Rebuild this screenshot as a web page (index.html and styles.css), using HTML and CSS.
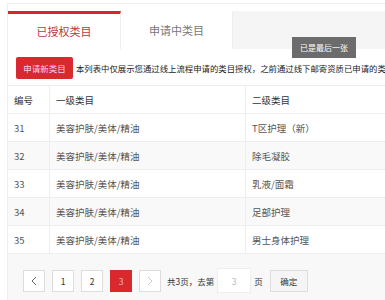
FILE: index.html
```html
<!DOCTYPE html>
<html lang="zh">
<head>
  <meta charset="UTF-8">
  <title>类目授权</title>
  <link rel="stylesheet" href="styles.css">
</head>
<body>

  <div class="page">
    <div class="tabs">
      <a class="tab active" href="#">已授权类目</a>
      <a class="tab" href="#">申请中类目</a>
      <div class="tab-rest"></div>
    </div>

    <div class="tip">已是最后一张</div>

    <div class="content">
      <div class="toolbar">
        <button class="btn-red">申请新类目</button>
        <span class="note">本列表中仅展示您通过线上流程申请的类目授权，之前通过线下邮寄资质已申请的类目</span>
      </div>

      <table class="cat-table">
        <thead>
          <tr>
            <th class="col-no">编号</th>
            <th class="col-first">一级类目</th>
            <th class="col-second">二级类目</th>
            <th class="col-more"></th>
          </tr>
        </thead>
        <tbody>
          <tr><td>31</td><td>美容护肤/美体/精油</td><td>T区护理（新）</td><td></td></tr>
          <tr><td>32</td><td>美容护肤/美体/精油</td><td>除毛凝胶</td><td></td></tr>
          <tr><td>33</td><td>美容护肤/美体/精油</td><td>乳液/面霜</td><td></td></tr>
          <tr><td>34</td><td>美容护肤/美体/精油</td><td>足部护理</td><td></td></tr>
          <tr><td>35</td><td>美容护肤/美体/精油</td><td>男士身体护理</td><td></td></tr>
        </tbody>
      </table>

      <div class="pager">
        <a class="pg" href="#">
          <svg width="6" height="10" viewBox="0 0 6 10"><polyline points="5,1 1,5 5,9" fill="none" stroke="#666" stroke-width="1"/></svg>
        </a>
        <a class="pg" href="#">1</a>
        <a class="pg" href="#">2</a>
        <a class="pg current" href="#">3</a>
        <a class="pg disabled" href="#">
          <svg width="6" height="10" viewBox="0 0 6 10"><polyline points="1,1 5,5 1,9" fill="none" stroke="#ccc" stroke-width="1"/></svg>
        </a>
        <span class="pg-text">共3页，去第</span>
        <input class="pg-input" type="text" value="3">
        <span class="pg-text">页</span>
        <button class="pg-ok">确定</button>
      </div>
    </div>
  </div>

</body>
</html>
```

FILE: styles.css
```css
body {
  margin: 0;
  padding: 0;
  background: #fff;
  font-family: "Microsoft YaHei", "Noto Sans CJK SC", sans-serif;
  color: #333;
  overflow: hidden;
}

.page {
  position: relative;
  margin: 3px 0 0 7px;
  padding-top: 7px;
  border-top: 1px solid #eee;
  border-left: 1px solid #eee;
  width: 420px;
  height: 300px;
}

/* tabs */
.tabs {
  display: flex;
  height: 38px;
  background: #f5f5f5;
}

.tab {
  display: flex;
  align-items: center;
  justify-content: center;
  width: 112px;
  background: #fff;
  border-right: 1px solid #eee;
  font-size: 11px;
  color: #777;
  text-decoration: none;
  box-sizing: border-box;
}

.tab.active {
  width: 113px;
  border-top: 3px solid #d4272d;
  padding-bottom: 2px;
  color: #b8393c;
}

.tab-rest {
  flex: 1;
}

.tip {
  position: absolute;
  left: 284px;
  top: 33px;
  width: 64px;
  height: 21px;
  line-height: 21px;
  text-align: center;
  background: rgba(95, 95, 95, 0.92);
  color: #fff;
  font-size: 8px;
}

.content {
  padding: 8px 0 0 0;
}

.toolbar {
  display: flex;
  align-items: center;
  padding-left: 8px;
  width: 369px;
  overflow: hidden;
  white-space: nowrap;
}

.btn-red {
  flex-shrink: 0;
  height: 22px;
  width: 57px;
  padding: 0;
  border: none;
  border-radius: 2px;
  background: #d9282e;
  color: #fce;
  font-family: inherit;
  font-size: 8.5px;
}

.note {
  margin-left: 3px;
  font-size: 8.4px;
  color: #222;
}

/* table */
.cat-table {
  margin-top: 6px;
  border-collapse: collapse;
  table-layout: fixed;
  width: 412px;
}

.cat-table th,
.cat-table td {
  height: 27px;
  padding: 0 0 0 6px;
  border-top: 1px solid #eee;
  border-right: 1px solid #eee;
  text-align: left;
  font-size: 9.5px;
  font-weight: normal;
  color: #555;
  white-space: nowrap;
}

.cat-table th {
  color: #333;
}

.cat-table tbody tr:nth-child(even) {
  background: #f9f9f9;
}

.col-no { width: 35px; }
.col-first { width: 189px; }
.col-second { width: 148px; }

/* pager */
.pager {
  display: flex;
  align-items: center;
  height: 48px;
  padding: 6px 0 0 15px;
  background: #f8f8f8;
  border-top: 1px solid #eee;
  box-sizing: border-box;
}

.pg {
  width: 22px;
  height: 22px;
  margin-right: 7px;
  box-sizing: border-box;
  border: 1px solid #ddd;
  background: #fff;
  display: flex;
  align-items: center;
  justify-content: center;
  font-size: 8.5px;
  color: #333;
  text-decoration: none;
}

.pg.current {
  background: #d9282e;
  border-color: #d9282e;
  color: #f5b5b5;
}

.pg.disabled {
  margin-right: 6px;
}

.pg-text {
  font-size: 8.5px;
  color: #333;
}

.pg-input {
  width: 34px;
  height: 25px;
  margin: 0 3px 0 3px;
  box-sizing: border-box;
  border: 1px solid #eee;
  text-align: center;
  font-family: inherit;
  font-size: 8.5px;
  color: #bbb;
  padding: 0;
}

.pg-ok {
  margin-left: 7px;
  width: 38px;
  height: 22px;
  padding: 0;
  border: 1px solid #ddd;
  background: #f5f5f5;
  font-family: inherit;
  font-size: 8.5px;
  color: #333;
}
```
